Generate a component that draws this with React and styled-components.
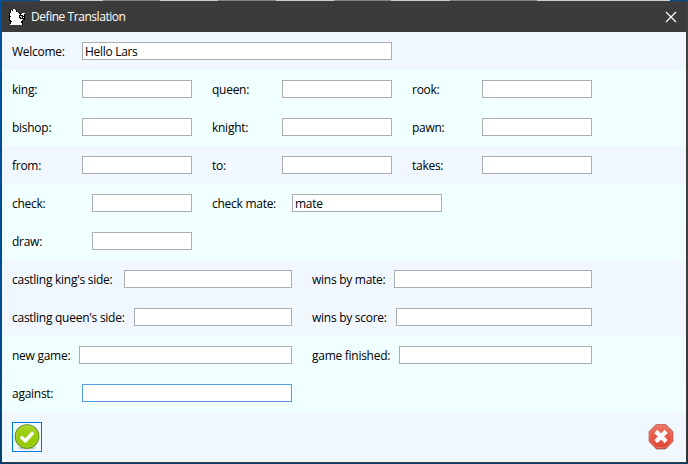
import React from "react";
import styled, { createGlobalStyle } from "styled-components";

const GlobalStyle = createGlobalStyle`
  * { box-sizing: border-box; }
  body { margin: 0; overflow: hidden; }
  button { padding: 0; border: 0; background: none; }
`;

const Desktop = styled.div`
  width: 688px;
  height: 464px;
  padding: 1px;
  background:
    linear-gradient(90deg, #00509a 0 40px, #cdd0ce 40px 103px, #838383 103px 160px,
      #cdd0ce 160px 218px, #838383 218px 276px, #cdd0ce 276px 334px, #838383 334px 391px,
      #cdd0ce 391px 450px, #838383 450px 537px, #cdd0ce 537px 670px, #00509a 670px) 0 0 / 100% 1px no-repeat,
    linear-gradient(180deg, #00539f, #004f91 65%, #003d6c);
  font-family: "Open Sans", "Noto Sans", sans-serif;
  font-size: 12px;
  color: #000;
`;

const Window = styled.main`
  height: 462px;
  display: flex;
  flex-direction: column;
  border: solid #3b3b3b;
  border-width: 0 1px 1px;
`;

const TitleBar = styled.header`
  flex: 0 0 31px;
  display: flex;
  align-items: center;
  padding: 0 9px 0 7px;
  background: #3b3b3b;
  color: #fff;
`;

const Title = styled.h1`
  flex: 1;
  margin: 0 0 0 6px;
  font-size: 12px;
  line-height: 18px;
  font-weight: 400;
  letter-spacing: -0.45px;
`;

const IconButton = styled.button`
  display: grid;
  place-items: center;
`;

const Band = styled.section`
  background: ${(p) => (p.$tone === "azure" ? "#f0ffff" : "#f0f7ff")};
`;

const Row = styled.div`
  height: 38px;
  display: flex;
  align-items: center;
  padding-left: 10px;
`;

const Field = styled.label`
  display: flex;
  align-items: center;
  margin-right: 20px;
`;

const Caption = styled.span`
  width: ${(p) => p.$width}px;
  padding-top: 2px;
  line-height: 18px;
  white-space: nowrap;
  letter-spacing: -0.27px;
`;

const Input = styled.input`
  width: ${(p) => p.$width}px;
  height: 18px;
  padding: 1px 2px 0;
  border: 1px solid ${(p) => (p.$active ? "#569de5" : "#abadb3")};
  border-radius: 0;
  outline: 0;
  background: #fff;
  color: #000;
  font: inherit;
  line-height: 15px;
  letter-spacing: -0.3px;
`;

const Footer = styled.footer`
  flex: 1;
  display: flex;
  justify-content: space-between;
  align-items: flex-start;
  padding: 10px;
  background: #f0f7ff;
`;

const ConfirmButton = styled(IconButton)`
  width: 30px;
  height: 30px;
  border: 1px solid #0078d7;
`;

const CancelButton = styled(IconButton)`
  width: 30px;
  height: 30px;
`;

const KnightIcon = () => (
  <svg width="16" height="16" viewBox="0 0 16 16" shapeRendering="crispEdges">
    <path fill="#000" d="M1 1h7v3h3v1h5v6h-2v5H1v-4H0V4h1z" />
    <path fill="#fff" d="M4 0h2v1h1v2h2v1h1v1h1v1h-1v3h1v1h3v1h-1v1h-1v2h1v2H1v-1h1v-2h1v-1H2v-1H1V8h1V7H1V4h1V1h1v1h1z" />
    <path fill="#fff" d="M13 4h3v1h-1v2h-1V6h-2V5h1zM14 8h1v1h-1z" />
    <path fill="#eee" d="M11 6h2v3h-2z" />
    <path fill="#b2bd45" d="M12 7h1v1h-1z" />
    <path fill="#000" d="M11 6h2v1h-2zM13 7h1v1h-1zM11 8h1v1h-1z" />
  </svg>
);

const CloseIcon = () => (
  <svg width="12" height="12" viewBox="0 0 12 12">
    <path d="M1 1l10 10M11 1L1 11" stroke="#fff" strokeWidth="1.2" fill="none" />
  </svg>
);

const CheckIcon = () => (
  <svg width="26" height="26" viewBox="0 0 26 26">
    <defs>
      <linearGradient id="green" x2="0" y2="1">
        <stop stopColor="#abd52c" /><stop offset=".48" stopColor="#99cc08" /><stop offset="1" stopColor="#91c700" />
      </linearGradient>
    </defs>
    <ellipse cx="13" cy="24" rx="9" ry="1.6" fill="#777" opacity=".35" />
    <circle cx="13" cy="12.5" r="11.8" fill="url(#green)" stroke="#619312" strokeWidth="1.1" />
    <circle cx="13" cy="12.5" r="10.7" fill="none" stroke="#b9dc4e" strokeWidth=".6" />
    <path d="M7.8 13.6l3.6 3.4 6.8-7.6" fill="none" stroke="#fff" strokeWidth="3.4" strokeLinecap="round" strokeLinejoin="round" />
  </svg>
);

const CrossIcon = () => (
  <svg width="26" height="27" viewBox="0 0 26 27">
    <defs>
      <linearGradient id="red" x2="0" y2="1">
        <stop stopColor="#ed7968" /><stop offset=".5" stopColor="#e75744" /><stop offset="1" stopColor="#df4633" />
      </linearGradient>
    </defs>
    <path d="M7 24h12l-2 2H9z" fill="#777" opacity=".4" />
    <path d="M8 .8h10l6.8 6.8v10L18 24.4H8l-6.8-6.8v-10z" fill="url(#red)" stroke="#bf4b3c" strokeLinejoin="round" />
    <path d="M8.4 1.8h9.2L23.8 8v9.2l-6.2 6.2H8.4l-6.2-6.2V8z" fill="none" stroke="#f28a7c" strokeWidth=".6" />
    <path d="M7.8 7.4L18.2 17.6M18.2 7.4L7.8 17.6" stroke="#fff" strokeWidth="4.3" />
  </svg>
);

// Each field: [caption, caption width, input width, value, active]
const bands = [
  { tone: "alice", rows: [[["Welcome:", 70, 310, "Hello Lars"]]] },
  {
    tone: "azure",
    rows: [
      [["king:", 70, 110], ["queen:", 70, 110], ["rook:", 70, 110]],
      [["bishop:", 70, 110], ["knight:", 70, 110], ["pawn:", 70, 110]],
    ],
  },
  { tone: "alice", rows: [[["from:", 70, 110], ["to:", 70, 110], ["takes:", 70, 110]]] },
  {
    tone: "azure",
    rows: [
      [["check:", 80, 100], ["check mate:", 80, 150, "mate"]],
      [["draw:", 80, 100]],
    ],
  },
  {
    tone: "alice",
    rows: [
      [["castling king's side:", 112, 168], ["wins by mate:", 82, 198]],
      [["castling queen's side:", 122, 158], ["wins by score:", 84, 196]],
    ],
  },
  {
    tone: "azure",
    rows: [
      [["new game:", 67, 213], ["game finished:", 87, 193]],
      [["against:", 70, 210, "", true]],
    ],
  },
];

export default function App() {
  return (
    <>
      <GlobalStyle />
      <Desktop>
        <Window>
          <TitleBar>
            <KnightIcon />
            <Title>Define Translation</Title>
            <IconButton aria-label="Close"><CloseIcon /></IconButton>
          </TitleBar>
          {bands.map((band, b) => (
            <Band key={b} $tone={band.tone}>
              {band.rows.map((row, r) => (
                <Row key={r}>
                  {row.map(([caption, captionWidth, inputWidth, value = "", active]) => (
                    <Field key={caption}>
                      <Caption $width={captionWidth}>{caption}</Caption>
                      <Input $width={inputWidth} $active={active} defaultValue={value} />
                    </Field>
                  ))}
                </Row>
              ))}
            </Band>
          ))}
          <Footer>
            <ConfirmButton aria-label="Confirm"><CheckIcon /></ConfirmButton>
            <CancelButton aria-label="Cancel"><CrossIcon /></CancelButton>
          </Footer>
        </Window>
      </Desktop>
    </>
  );
}
